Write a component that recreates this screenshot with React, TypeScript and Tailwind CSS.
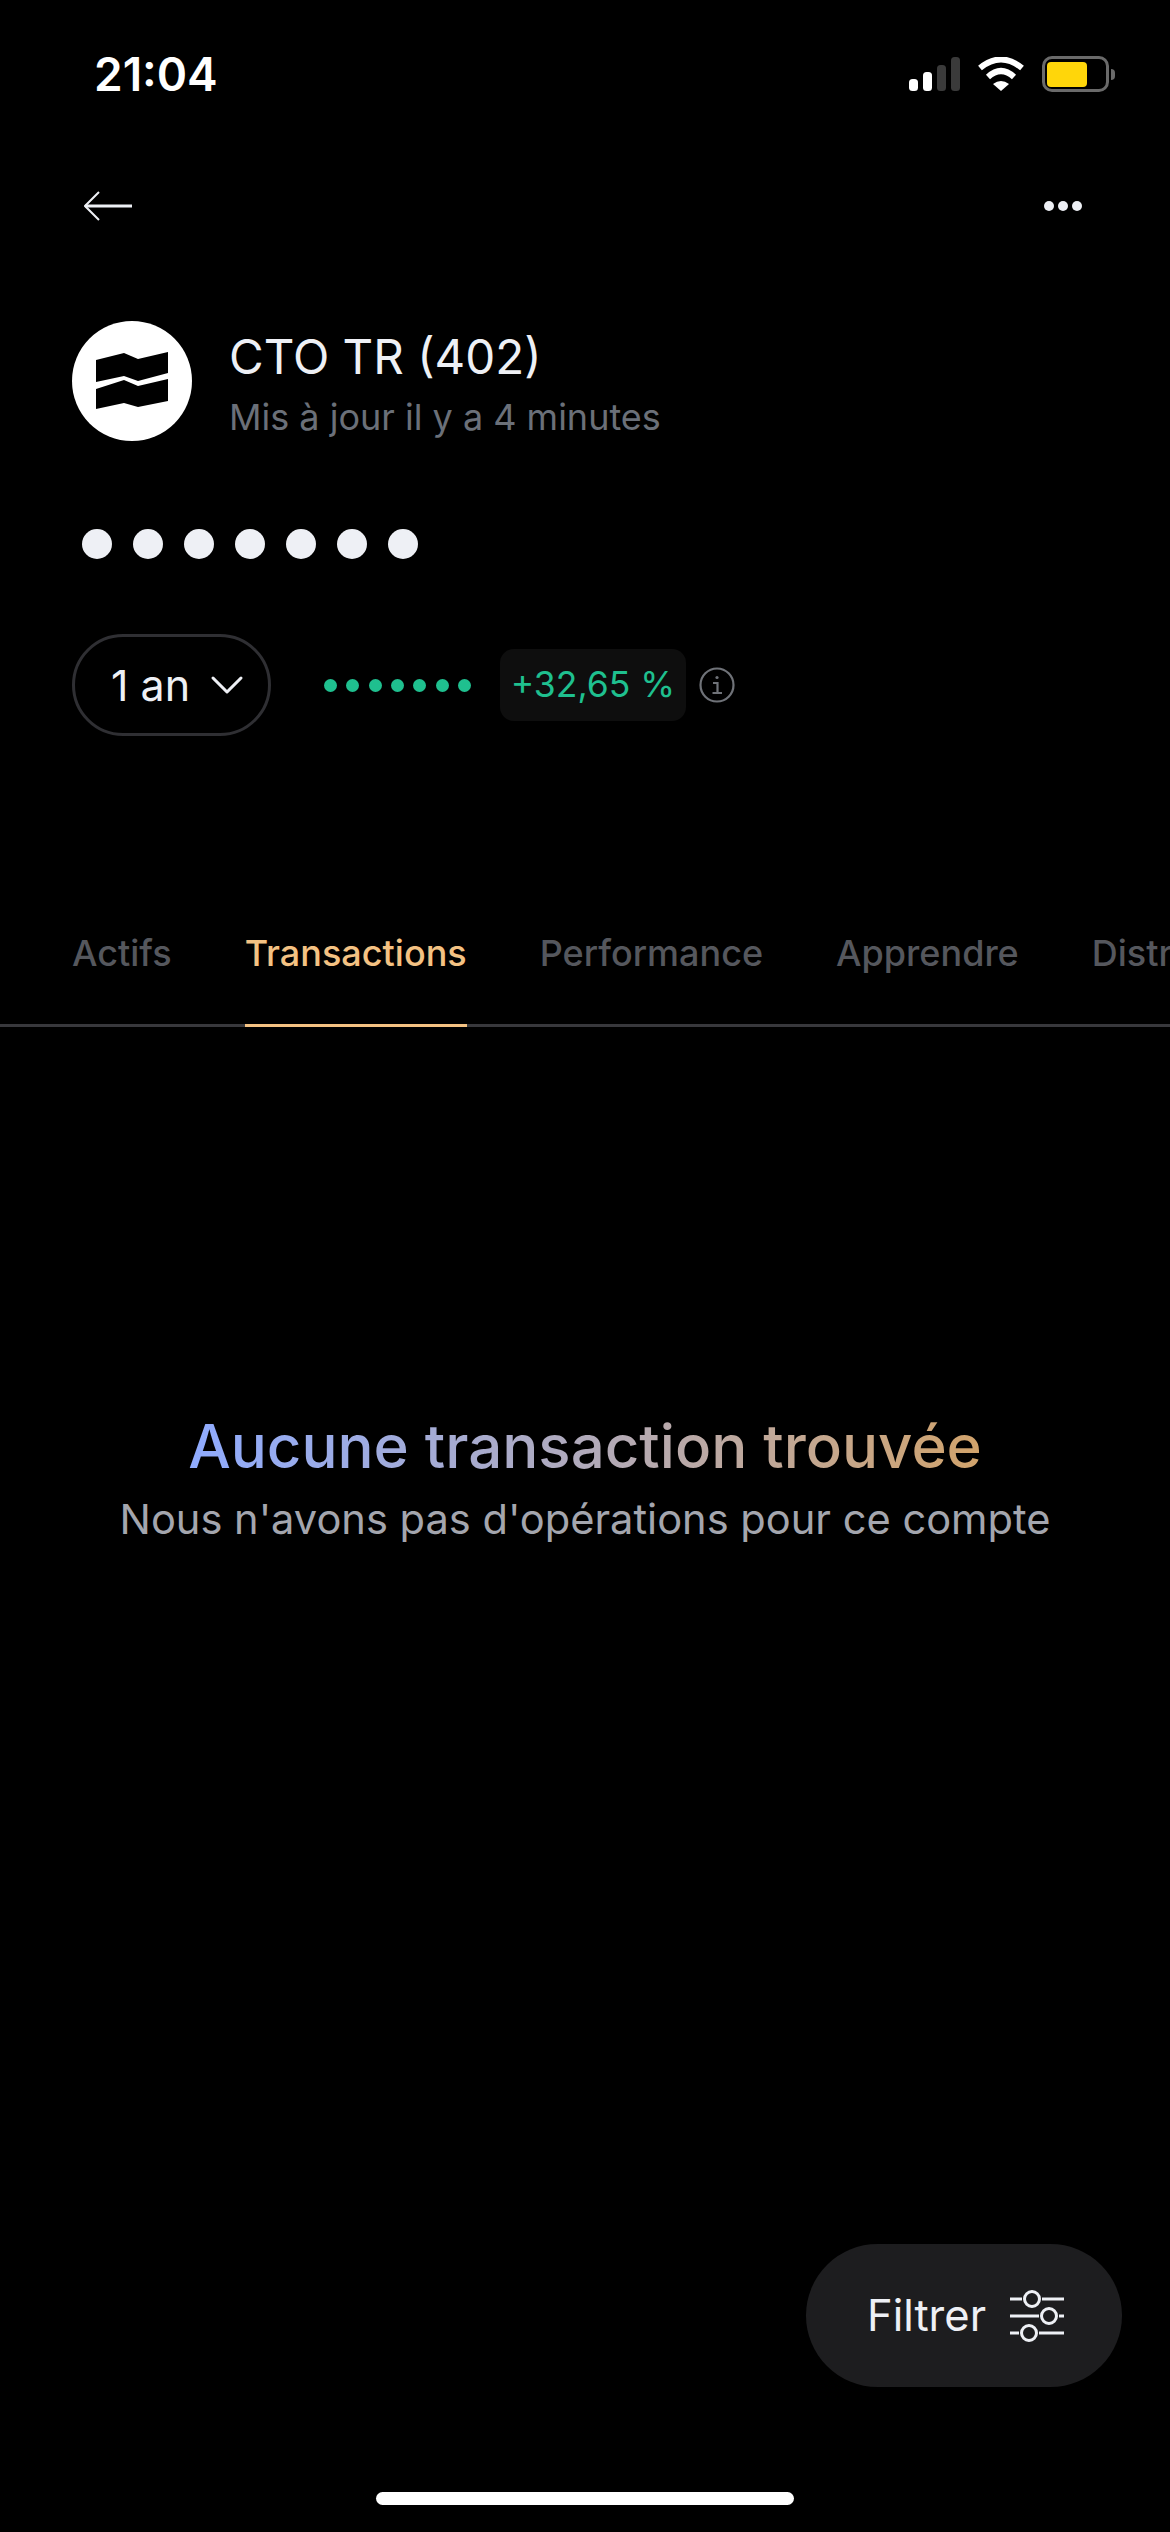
import React from 'react';
import { ChevronDown } from 'lucide-react';

const TABS = ['Actifs', 'Transactions', 'Performance', 'Apprendre', 'Distribution'];

const SignalIcon = () => (
    <svg width="51" height="34" viewBox="0 0 51 34">
        <rect x="0" y="22" width="9" height="12" rx="3.5" fill="#fff" />
        <rect x="14" y="15" width="9" height="19" rx="3.5" fill="#fff" />
        <rect x="28" y="8" width="9" height="26" rx="3.5" fill="#3a3a3a" />
        <rect x="42" y="0" width="9" height="34" rx="3.5" fill="#3a3a3a" />
    </svg>
);

const WifiIcon = () => (
    <svg width="48" height="34" viewBox="0 0 48 34" fill="none" stroke="#fff" strokeWidth="6">
        <path d="M3 11 Q24 -6 45 11" />
        <path d="M11 20 Q24 8 37 20" />
        <path d="M24 34 L16 27 Q24 21 32 27 Z" fill="#fff" stroke="none" />
    </svg>
);

const BatteryIcon = () => (
    <div className="flex items-center gap-[2px]">
        <div className="flex h-[36px] w-[67px] items-center rounded-[10px] border-[3px] border-[#6a6a6a] pl-[2px]">
            <div className="h-[25px] w-[40px] rounded-[4px] bg-[#ffd60a]" />
        </div>
        <div className="h-[11px] w-[4px] rounded-r-full bg-[#6a6a6a]" />
    </div>
);

const StatusBar = () => (
    <div className="flex h-[148px] items-start justify-between pl-[94px] pr-[55px] pt-[48px]">
        <span className="text-[46px] leading-[53px] font-semibold text-white">21:04</span>
        <div className="flex items-center gap-[17px] pt-[8px]">
            <SignalIcon />
            <WifiIcon />
            <BatteryIcon />
        </div>
    </div>
);

const TopNav = () => (
    <div className="flex h-[116px] items-center justify-between pl-[84px] pr-[88px]">
        <svg width="48" height="30" viewBox="0 0 48 30" fill="none" stroke="#eef0f5">
            <path d="M1 15 H48" strokeWidth="3" />
            <path d="M15 1 L1 15 L15 29" strokeWidth="2" />
        </svg>
        <div className="flex gap-[4px]">
            <div className="h-[10px] w-[10px] rounded-full bg-[#eef0f5]" />
            <div className="h-[10px] w-[10px] rounded-full bg-[#eef0f5]" />
            <div className="h-[10px] w-[10px] rounded-full bg-[#eef0f5]" />
        </div>
    </div>
);

const AccountHeader = () => (
    <div className="flex items-start gap-[37px] pl-[72px] pt-[57px]">
        <svg width="120" height="120" viewBox="0 0 120 120">
            <circle cx="60" cy="60" r="60" fill="#fff" />
            <path d="M24 39 L52 32 L66 38 L96 31 V52 L66 60 L52 55 L24 61 Z" fill="#000" />
            <path d="M24 68 L52 59 L66 65 L96 58 V80 L66 86 L52 82 L24 88 Z" fill="#000" />
        </svg>
        <div className="mt-[7px] flex flex-col">
            <span className="text-[47.5px] leading-[58px] font-normal text-[#eef0f5]">CTO TR (402)</span>
            <span className="mt-[9px] text-[36px] leading-[44px] text-[#6b7079]">Mis à jour il y a 4 minutes</span>
        </div>
    </div>
);

const MaskedBalance = () => (
    <div className="flex gap-[21px] pl-[82px] pt-[88px]">
        {[0, 1, 2, 3, 4, 5, 6].map((i) => (
            <div key={i} className="h-[30px] w-[30px] rounded-full bg-[#eef0f5]" />
        ))}
    </div>
);

const PerformanceRow = () => (
    <div className="flex items-center pl-[72px] pt-[75px]">
        <div className="flex h-[102px] w-[199px] items-center rounded-[51px] border-[3px] border-[#2f2f33] pl-[36px]">
            <span className="text-[43px] leading-none text-[#eef0f5]">1 an</span>
            <ChevronDown className="ml-[9px] h-[56px] w-[56px] text-[#eef0f5]" strokeWidth={1.3} />
        </div>
        <div className="ml-[53px] flex gap-[9.33px]">
            {[0, 1, 2, 3, 4, 5, 6].map((i) => (
                <div key={i} className="h-[13px] w-[13px] rounded-full bg-[#1fc08f]" />
            ))}
        </div>
        <div className="ml-[29px] flex h-[72px] w-[186px] items-center justify-center rounded-[14px] bg-[#0e0e0e] text-[35.5px] text-[#1fc08f]">
            +32,65 %
        </div>
        <svg className="ml-[13px]" width="36" height="36" viewBox="0 0 36 36" fill="none" stroke="#6f7278" strokeWidth="2.2">
            <circle cx="18" cy="18" r="16.5" />
            <path d="M14 16 H18.5 V26 M13.5 26 H23" />
            <circle cx="18" cy="10.5" r="1.6" fill="#6f7278" stroke="none" />
        </svg>
    </div>
);

const Tabs = () => (
    <div className="mt-[165px] overflow-hidden">
        <div className="flex h-[126px] gap-[73px] border-b-[3px] border-[#38383c] pl-[72px]">
            {TABS.map((tab) => {
                const active = tab === 'Transactions';
                return (
                    <div
                        key={tab}
                        className={`-mb-[3px] flex shrink-0 items-start pt-[30px] text-[36px] leading-[44px] font-[450] ${
                            active ? 'border-b-[3px] border-[#f4c283] text-[#f4c283]' : 'text-[#55575d]'
                        }`}
                    >
                        {tab}
                    </div>
                );
            })}
        </div>
    </div>
);

const EmptyState = () => (
    <div className="flex flex-col items-center pt-[384px]">
        <span className="bg-gradient-to-r from-[#8fabff] to-[#d1a36b] bg-clip-text text-[60px] leading-[70px] font-[450] text-transparent">
            Aucune transaction trouvée
        </span>
        <span className="mt-[14px] text-[41.6px] leading-[48px] text-[#a4a6ae]">Nous n'avons pas d'opérations pour ce compte</span>
    </div>
);

const FilterButton = () => (
    <div className="absolute left-[806px] top-[2244px] flex h-[143px] w-[316px] items-center rounded-[72px] bg-[#1d1d1f] pl-[61px]">
        <span className="text-[43.5px] leading-none text-[#eef0f5]">Filtrer</span>
        <svg className="ml-[24px]" width="54" height="52" viewBox="0 0 54 52" fill="none" stroke="#eef0f5" strokeWidth="3">
            <path d="M0 9 H12 M32 9 H54" />
            <circle cx="22" cy="9" r="7.5" />
            <path d="M0 26 H29 M49 26 H54" />
            <circle cx="39" cy="26" r="7.5" />
            <path d="M0 43 H9 M29 43 H54" />
            <circle cx="19" cy="43" r="7.5" />
        </svg>
    </div>
);

export default function App() {
    return (
        <div className="relative flex h-[2532px] w-[1170px] flex-col overflow-hidden bg-black font-['Inter',sans-serif]">
            <StatusBar />
            <TopNav />
            <AccountHeader />
            <MaskedBalance />
            <PerformanceRow />
            <Tabs />
            <EmptyState />
            <FilterButton />
            {/* home indicator */}
            <div className="mt-auto mb-[27px] flex justify-center">
                <div className="h-[13px] w-[418px] rounded-full bg-white" />
            </div>
        </div>
    );
}
